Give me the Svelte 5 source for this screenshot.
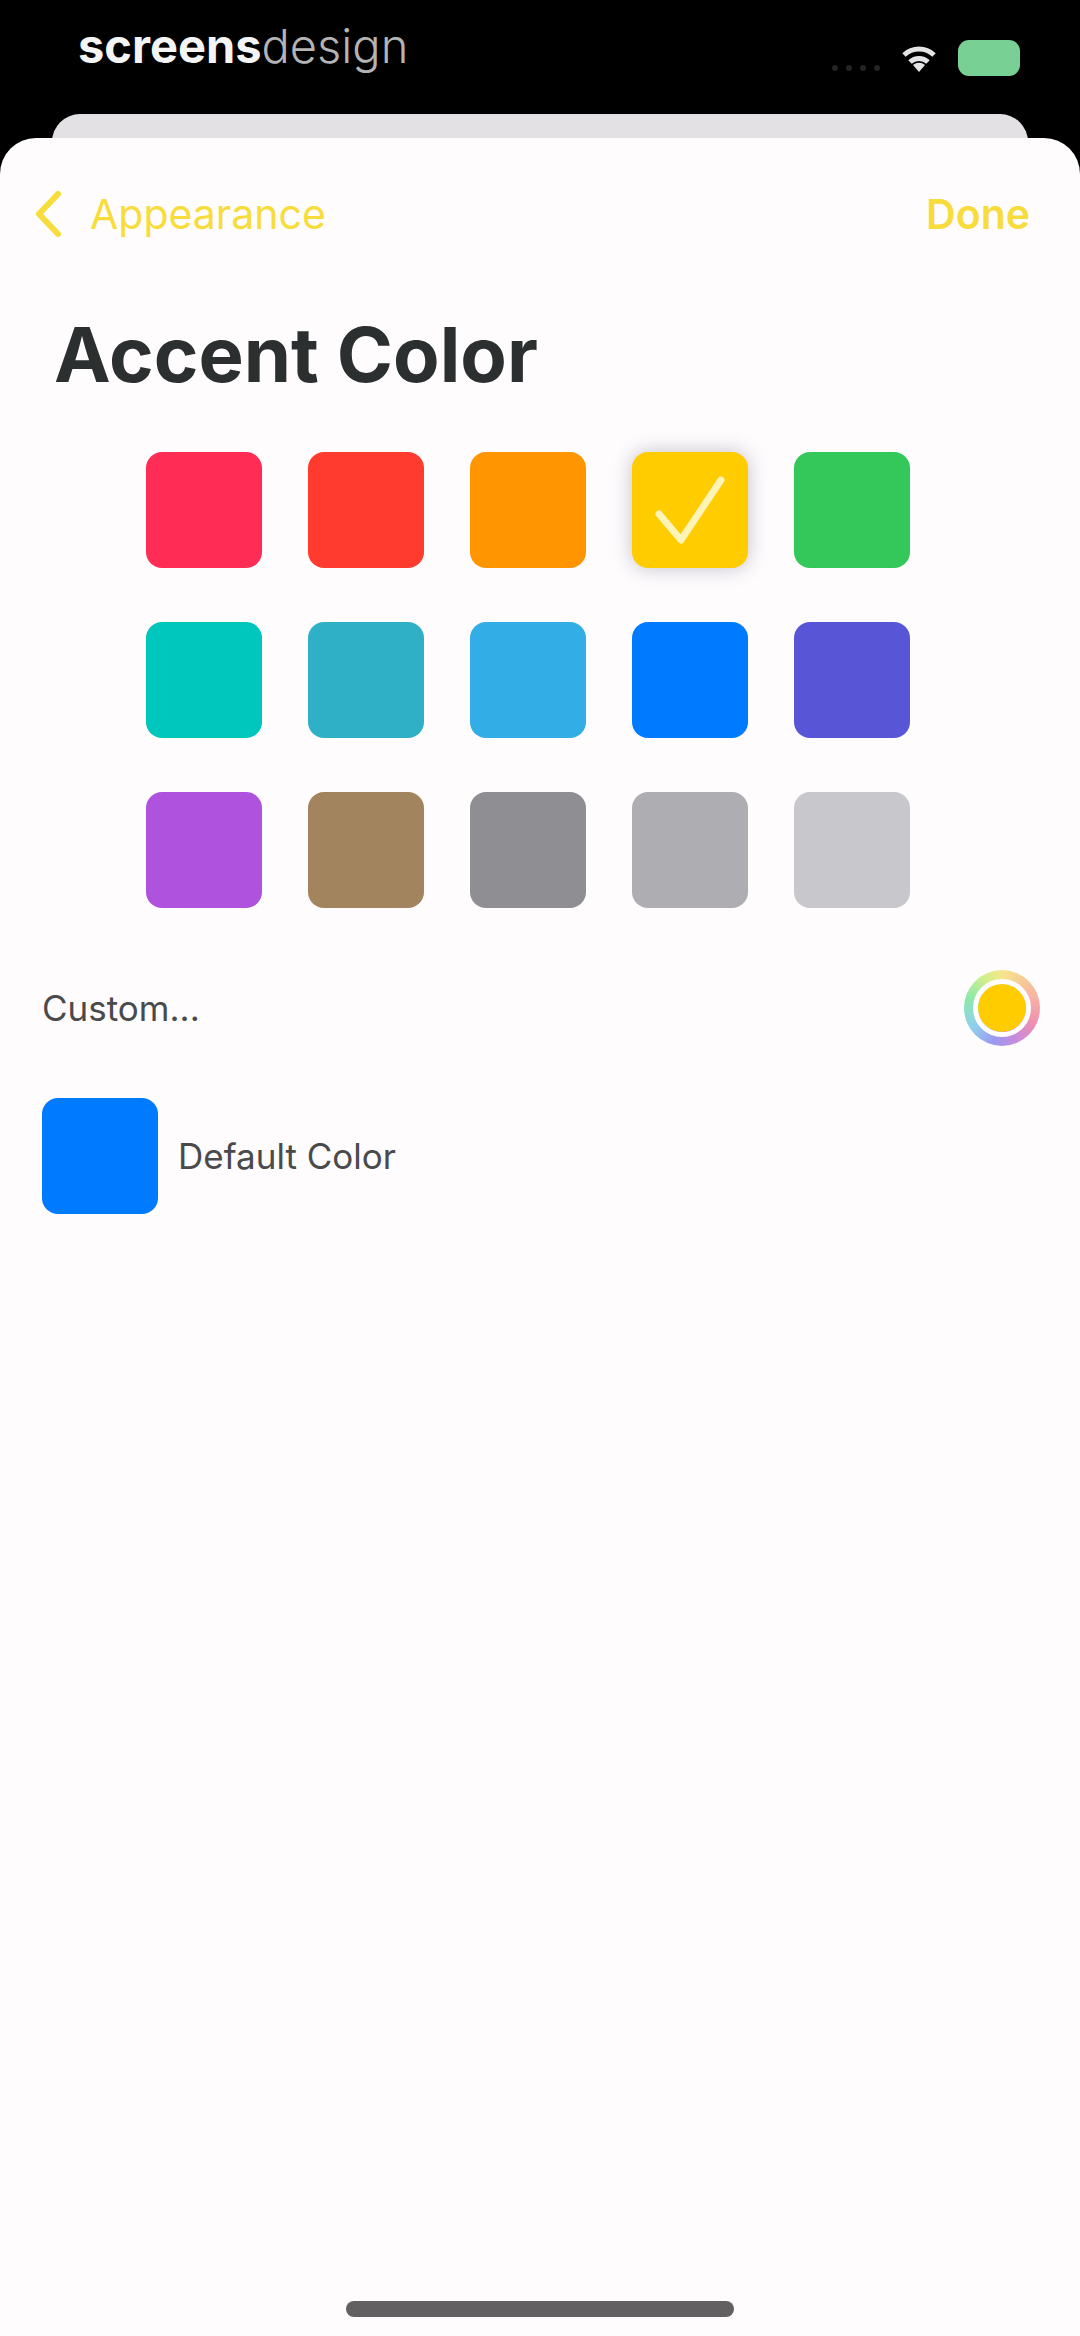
<script lang="ts">
  type Swatch = { name: string; value: string };

  const swatches: Swatch[] = [
    { name: "Pink", value: "#ff2d55" },
    { name: "Red", value: "#ff3b30" },
    { name: "Orange", value: "#ff9500" },
    { name: "Yellow", value: "#ffcc00" },
    { name: "Green", value: "#34c759" },
    { name: "Mint", value: "#00c7be" },
    { name: "Teal", value: "#30b0c7" },
    { name: "Cyan", value: "#32ade6" },
    { name: "Blue", value: "#007aff" },
    { name: "Indigo", value: "#5856d6" },
    { name: "Purple", value: "#af52de" },
    { name: "Brown", value: "#a2845e" },
    { name: "Gray", value: "#8e8e93" },
    { name: "Gray 2", value: "#aeaeb2" },
    { name: "Gray 3", value: "#c7c7cc" },
  ];
  const defaultColor = "#007aff";

  let accent = $state("#ffcc00");
</script>

<div class="screen">
  <header class="status">
    <div class="brand"><b>screens</b>design</div>
    <div class="indicators">
      <div class="cell"><i></i><i></i><i></i><i></i></div>
      <svg class="wifi" viewBox="0 0 38 28" aria-hidden="true">
        <path d="M19 28l6-7a9 9 0 0 0-12 0z" />
        <path d="M10 18a13 13 0 0 1 18 0M4 11a22 22 0 0 1 30 0" />
      </svg>
      <div class="battery"></div>
    </div>
  </header>

  <div class="behind"></div>

  <main class="sheet">
    <nav>
      <button class="back">
        <svg viewBox="0 0 28 48" aria-hidden="true"><path d="M24 4L5 24l19 20" /></svg>
        Appearance
      </button>
      <button>Done</button>
    </nav>

    <h1>Accent Color</h1>

    <div class="grid" role="radiogroup" aria-label="Accent Color">
      {#each swatches as swatch}
        <label class="swatch" class:selected={accent === swatch.value} style:background={swatch.value}>
          <input type="radio" name="accent" value={swatch.value} aria-label={swatch.name} bind:group={accent} />
          {#if accent === swatch.value}
            <svg viewBox="0 0 76 76" aria-hidden="true"><path d="M7 42l22 26L69 8" /></svg>
          {/if}
        </label>
      {/each}
    </div>

    <div class="row">
      <label for="custom">Custom...</label>
      <span class="well"><input id="custom" type="color" bind:value={accent} /></span>
    </div>

    <button class="row default" onclick={() => (accent = defaultColor)}>
      <span class="swatch" style:background={defaultColor}></span>
      Default Color
    </button>

    <div class="home"></div>
  </main>
</div>

<style>
  :global(body) { background:#000; }
  .screen { display:flex; flex-direction:column; min-height:100vh; background:#000; color:#4a4a4c; font-family:Inter,"Liberation Sans",sans-serif; }
  .status { display:flex; justify-content:space-between; height:114px; padding:0 60px 0 78px; box-sizing:border-box; }
  .brand { padding-top:18px; color:#b4b4b4; font-size:47px; line-height:56px; font-weight:300; }
  .brand b { color:#f4f4f4; font-weight:700; }
  .indicators { display:flex; align-items:center; gap:20px; height:116px; }
  .cell { display:flex; gap:8px; padding-top:20px; }
  .cell i { width:6px; height:6px; border-radius:50%; background:#242426; }
  .wifi { width:38px; height:28px; fill:#e4e4e6; }
  .wifi path + path { fill:none; stroke:#e4e4e6; stroke-width:5; }
  .battery { width:62px; height:36px; border-radius:11px; background:#78d094; }

  .behind { height:48px; margin:0 52px -24px; border-radius:28px 28px 0 0; background:#e3e1e4; }
  .sheet { position:relative; display:flex; flex:1; flex-direction:column; border-radius:36px 36px 0 0; background:#fefcfd; }

  button { padding:0; border:0; background:none; color:inherit; font:inherit; cursor:pointer; }
  nav { display:flex; justify-content:space-between; align-items:center; height:56px; margin-top:48px; padding:0 50px 0 34px; color:#f7dc3c; font-size:41px; }
  nav button:last-child { font-weight:600; }
  .back { display:flex; align-items:center; gap:28px; }
  .back svg { width:28px; height:48px; }
  .back path { fill:none; stroke:currentColor; stroke-width:6; stroke-linecap:round; stroke-linejoin:round; }

  h1 { margin:62px 54px 0; color:#2c2f30; font-size:76px; line-height:100px; font-weight:700; }

  .grid { display:grid; grid-template-columns:repeat(5,116px); gap:54px 46px; margin:48px auto 0 146px; }
  .swatch { display:grid; place-items:center; width:116px; height:116px; border-radius:16px; cursor:pointer; }
  .swatch.selected { box-shadow:0 0 20px rgba(40,40,70,.28); }
  .swatch input { position:absolute; opacity:0; }
  .swatch svg { width:76px; height:76px; }
  .swatch path { fill:none; stroke:#fff3b8; stroke-width:7; stroke-linecap:round; stroke-linejoin:round; }

  .row { display:flex; align-items:center; justify-content:space-between; margin:62px 40px 0 42px; font-size:35px; }
  .row.default { justify-content:flex-start; gap:20px; margin-top:52px; }
  .well { display:grid; place-items:center; width:76px; height:76px; border-radius:50%; background:conic-gradient(#f6e58a,#f7b2a4 20%,#ee8fb0 32%,#c58be0 44%,#9a9af0 54%,#8fd0ee 66%,#8ee9a8 80%,#d3ef8c 92%,#f6e58a); }
  .well input { appearance:none; width:58px; height:58px; padding:0; border:5px solid #fefcfd; border-radius:50%; background:none; cursor:pointer; }
  .well input::-webkit-color-swatch-wrapper { padding:0; }
  .well input::-webkit-color-swatch { border:0; border-radius:50%; }

  .home { width:36%; height:16px; margin:auto auto 19px; border-radius:8px; background:#626061; }
</style>
